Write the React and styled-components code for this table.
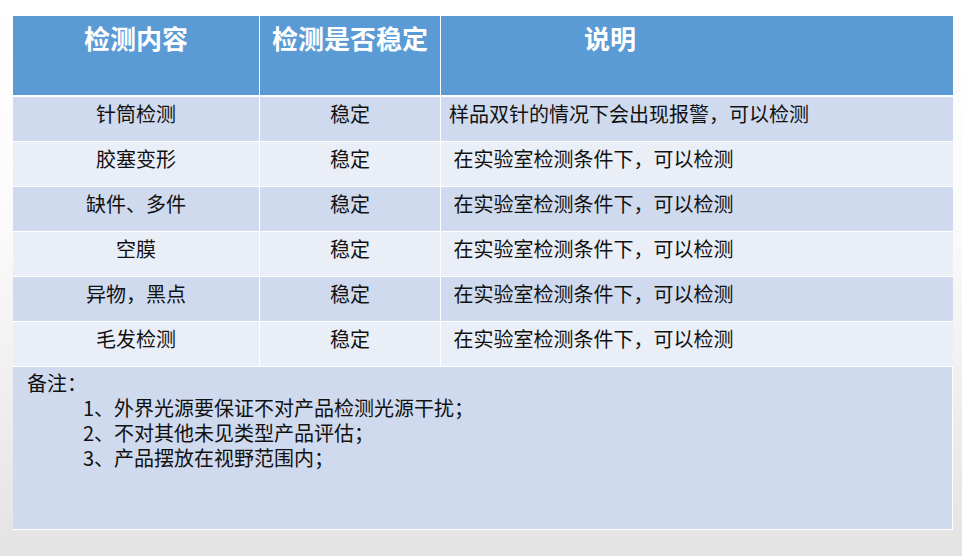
import React from "react";
import styled, { createGlobalStyle } from "styled-components";

const GlobalStyle = createGlobalStyle`
  html, body {
    margin: 0;
    padding: 0;
  }
  body {
    width: 962px;
    height: 556px;
    overflow: hidden;
    background: linear-gradient(180deg, #ffffff 0%, #fbfbfb 40%, #e3e3e3 100%);
    font-family: "Noto Sans CJK SC", "Liberation Sans", sans-serif;
  }
`;

const Slide = styled.div`
  padding: 16px 9px 0 13px;
`;

const Table = styled.div`
  width: 940px;
  display: grid;
  grid-template-columns: 246px 180px 1fr;
  column-gap: 1px;
  row-gap: 1px;
  background: #ffffff;
`;

const HeadCell = styled.div`
  background: #5b9bd5;
  height: 79px;
  margin-bottom: 1px;
  color: #ffffff;
  font-size: 26px;
  font-weight: 700;
  line-height: 44px;
  white-space: nowrap;
  text-align: ${(p) => (p.$left ? "left" : "center")};
  padding-left: ${(p) => (p.$left ? "143px" : "0")};
`;

const Cell = styled.div`
  background: ${(p) => (p.$odd ? "#cfdaee" : "#e9eef7")};
  height: 44px;
  color: #111111;
  font-size: 20px;
  line-height: 33px;
  white-space: pre;
  text-align: ${(p) => (p.$left ? "left" : "center")};
  padding-left: ${(p) => (p.$left ? "8px" : "0")};
`;

const Note = styled.div`
  grid-column: 1 / -1;
  background: #cfdaee;
  height: 163px;
  box-sizing: border-box;
  padding: 3px 0 0 14px;
  color: #111111;
  font-size: 20px;
  line-height: 25px;
  border-right: 1px solid #ffffff;
  border-bottom: 1px solid #ffffff;
`;

const NoteItem = styled.div`
  padding-left: 56px;
`;

const rows = [
  ["针筒检测", "稳定", "样品双针的情况下会出现报警，可以检测"],
  ["胶塞变形", "稳定", " 在实验室检测条件下，可以检测"],
  ["缺件、多件", "稳定", " 在实验室检测条件下，可以检测"],
  ["空膜", "稳定", " 在实验室检测条件下，可以检测"],
  ["异物，黑点", "稳定", " 在实验室检测条件下，可以检测"],
  ["毛发检测", "稳定", " 在实验室检测条件下，可以检测"],
];

const notes = [
  "1、外界光源要保证不对产品检测光源干扰；",
  "2、不对其他未见类型产品评估；",
  "3、产品摆放在视野范围内；",
];

export default function App() {
  return (
    <>
      <GlobalStyle />
      <Slide>
        <Table>
          <HeadCell>检测内容</HeadCell>
          <HeadCell>检测是否稳定</HeadCell>
          <HeadCell $left>说明</HeadCell>
          {rows.map((r, i) => (
            <React.Fragment key={r[0]}>
              <Cell $odd={i % 2 === 0}>{r[0]}</Cell>
              <Cell $odd={i % 2 === 0}>{r[1]}</Cell>
              <Cell $odd={i % 2 === 0} $left>{r[2]}</Cell>
            </React.Fragment>
          ))}
          <Note>
            备注：
            {notes.map((n) => (
              <NoteItem key={n}>{n}</NoteItem>
            ))}
          </Note>
        </Table>
      </Slide>
    </>
  );
}
